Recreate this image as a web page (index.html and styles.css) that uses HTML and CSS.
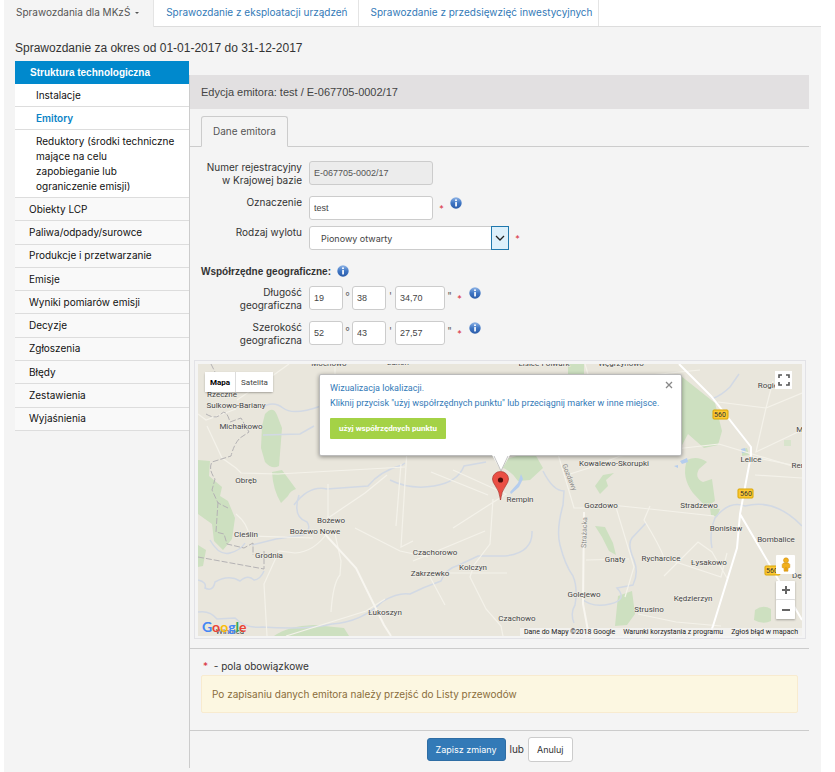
FILE: index.html
```html
<!DOCTYPE html>
<html lang="pl">
<head>
    <meta charset="UTF-8">
    <meta name="viewport" content="width=device-width, initial-scale=1.0">
    <title>Edycja emitora</title>
    <link rel="stylesheet" href="styles.css">
</head>
<body>
    <svg class="defs" width="0" height="0" aria-hidden="true">
        <defs>
            <linearGradient id="infoFill" x1="0" y1="0" x2="0" y2="1">
                <stop offset="0" stop-color="#8fb4e6"/>
                <stop offset="0.5" stop-color="#3f76c4"/>
                <stop offset="1" stop-color="#2a5ba8"/>
            </linearGradient>
            <symbol id="info" viewBox="0 0 12 12">
                <circle cx="6" cy="6" r="5.7" fill="url(#infoFill)"/>
                <circle cx="6" cy="3.3" r="1" fill="#fff"/>
                <rect x="5.2" y="5" width="1.7" height="4.4" rx="0.3" fill="#fff"/>
            </symbol>
        </defs>
    </svg>

    <div class="page">
        <nav class="top-tabs">
            <a class="active" href="#">Sprawozdania dla MKzŚ <span class="caret"></span></a>
            <a href="#">Sprawozdanie z eksploatacji urządzeń</a>
            <a href="#">Sprawozdanie z przedsięwzięć inwestycyjnych</a>
        </nav>

        <div class="body">
            <h1>Sprawozdanie za okres od 01-01-2017 do 31-12-2017</h1>

            <div class="columns">
                <aside class="sidebar">
                    <a class="side-head" href="#">Struktura technologiczna</a>
                    <ul class="submenu">
                        <li><a href="#">Instalacje</a></li>
                        <li><a class="current" href="#">Emitory</a></li>
                        <li><a href="#">Reduktory (środki techniczne mające na celu<br>zapobieganie lub ograniczenie emisji)</a></li>
                    </ul>
                    <ul class="menu">
                        <li><a href="#">Obiekty LCP</a></li>
                        <li><a href="#">Paliwa/odpady/surowce</a></li>
                        <li><a href="#">Produkcje i przetwarzanie</a></li>
                        <li><a href="#">Emisje</a></li>
                        <li><a href="#">Wyniki pomiarów emisji</a></li>
                        <li><a href="#">Decyzje</a></li>
                        <li><a href="#">Zgłoszenia</a></li>
                        <li><a href="#">Błędy</a></li>
                        <li><a href="#">Zestawienia</a></li>
                        <li><a href="#">Wyjaśnienia</a></li>
                    </ul>
                </aside>

                <main class="content">
                    <h2>Edycja emitora: test / E-067705-0002/17</h2>

                    <div class="tabs">
                        <a class="tab" href="#">Dane emitora</a>
                    </div>

                    <form>
                        <div class="fields">
                            <div class="row">
                                <label for="numer">Numer rejestracyjny<br>w Krajowej bazie</label>
                                <input class="wide" id="numer" type="text" value="E-067705-0002/17" readonly>
                            </div>
                            <div class="row tight">
                                <label for="oznaczenie">Oznaczenie</label>
                                <input class="wide" id="oznaczenie" type="text" value="test">
                                <span class="req">*</span>
                                <svg class="info"><use href="#info"/></svg>
                            </div>
                            <div class="row">
                                <label for="wylot">Rodzaj wylotu</label>
                                <div class="select">
                                    <select id="wylot">
                                        <option>Pionowy otwarty</option>
                                    </select>
                                    <span class="select-arrow">
                                        <svg width="10" height="6" viewBox="0 0 10 6"><path d="M1 1l4 4 4-4" fill="none" stroke="#222" stroke-width="1.3"/></svg>
                                    </span>
                                </div>
                                <span class="req">*</span>
                            </div>

                            <h3>Współrzędne geograficzne: <svg class="info"><use href="#info"/></svg></h3>

                            <div class="row">
                                <label for="dlugosc">Długość<br>geograficzna</label>
                                <input class="short" id="dlugosc" type="text" value="19">
                                <span class="unit">°</span>
                                <input class="short" type="text" value="38" aria-label="minuty długości">
                                <span class="unit">'</span>
                                <input class="medium" type="text" value="34,70" aria-label="sekundy długości">
                                <span class="unit">"</span>
                                <span class="req near">*</span>
                                <svg class="info"><use href="#info"/></svg>
                            </div>
                            <div class="row">
                                <label for="szerokosc">Szerokość<br>geograficzna</label>
                                <input class="short" id="szerokosc" type="text" value="52">
                                <span class="unit">°</span>
                                <input class="short" type="text" value="43" aria-label="minuty szerokości">
                                <span class="unit">'</span>
                                <input class="medium" type="text" value="27,57" aria-label="sekundy szerokości">
                                <span class="unit">"</span>
                                <span class="req near">*</span>
                                <svg class="info"><use href="#info"/></svg>
                            </div>
                        </div>

                        <div class="map-frame">
                            <div class="map">
                                <svg class="map-canvas" viewBox="0 0 604 272" preserveAspectRatio="xMidYMid slice">
                                    <rect width="604" height="272" fill="#e9e6dc"/>

                                    <!-- forests -->
                                    <g fill="#cde0c0">
                                        <path d="M67 50q8-9 12 1l5 13-3 38q-7 4-14-4l-4-14 1-22z"/>
                                        <path d="M74 108l10-2 14 19q-6 2-8 7l-7 7q-8-13-9-31z"/>
                                        <path d="M0 96l12 1-1 15 13 11-2 9 8 5 7 17-3 21-9 11-9-9-2-17-14-10z"/>
                                        <path d="M0 181l8 5-3 16-5 1z"/>
                                        <path d="M76 272q14-10 40-11l30 3 5 8z"/>
                                        <path d="M302 97l20-6 15-1 8 14-13 12-12 1q-8-12-18-14z"/>
                                        <path d="M370 0h16v12h-16z"/>
                                        <path d="M483 12l34 27 7 28-4 14-14 3-16-14-7 13z"/>
                                        <path d="M489 96q10-5 20 2l-8 7q-5 9 4 13l9-3 3 22-9 6-13-14q-12-16-6-33z"/>
                                        <path d="M397 122l8-11 11-2-8 7 2 6-8 8zM397 162l10 1 8 16 3 12-7-4-7-14z"/>
                                        <path d="M420 232l14-5 3 23-8 11-12 1z"/>
                                        <path d="M557 246q8-6 16-1v12q-8 4-17-1z"/>
                                        <path d="M512 144l10 1-3 8-6-2zM544 85l5-1 2 7-7 1z"/>
                                        <path d="M586 76h7v6h-7z" fill="#d8e4cc"/>
                                    </g>

                                    <!-- rivers -->
                                    <g fill="none" stroke="#d2d9e4" stroke-width="1.5">
                                        <path d="M63 44q12-8 22 0t38-2M65 71l37-1 14-8"/>
                                        <path d="M96 141q15-20 33-16l41-3q12-15 34-21l3-2M192 116q20 10 44 6t30-20l22-4"/>
                                        <path d="M101 131q-7 22 8 27 5 7-4 13l-27 4-24 6M0 216q9 2 7 8 8 4 10-6 14-8 25-1 8-7 14-1 6 0 10-9"/>
                                        <path d="M12 176q9 16 20 13t15-10M0 248q12-2 19 7l18-1q11 11 27 9 46 3 70-3 30-2 51-23 16-9 27-7 14-7 31-13 4-12 18-16l19-9q15 0 27 0 28-3 27-25"/>
                                        <path d="M345 107q10 20 21 20l-1 14q-7 25-3 40 5 20 13 31 5 12 2 29-5 8-1 18M384 235q10 9 28 5t7-16l16-3q6-12 1-25-7-16-2-22l14-15"/>
                                        <path d="M541 10l-9 13q-8 8-18 12M514 184q-3-15 3-30 14-18 30-12 30-8 57 20"/>
                                    </g>
                                    <path d="M312 128l8-9 3-9 2 5-4 8-8 7zM482 97l7-3 1 4-6 2zM476 102l4-1v3zM543 85l4-1 1 4-4 1z" fill="#b5cdee"/>

                                    <!-- minor roads -->
                                    <g fill="none" stroke="#f4f2ea" stroke-width="1.2">
                                        <path d="M0 50l8 6 30-11M9 62l15 32 14 10 5 5 37 1 127-7M91 0L70 15 39 36M130 120v34l37-25 22-18M38 150q12 10 13 22l64 2"/>
                                        <path d="M137 170l6 27-1 14q-7 8-9 37M157 164l45 23 28 6M130 168q-14 20-33 21l-16-2-15 33 3 52M137 0v20"/>
                                        <path d="M209 86l-6 97 12-6M203 100l-5 62M255 106l53 24-53 34M295 135l-3 45-16 21-4 12 16 32 15 17 2 10M215 197l72-30M232 213l15 28M235 209h74"/>
                                        <path d="M88 272l80-25 19-12M290 131l-57-23M360 90l16 54h12M372 110l22-7 28-11 64-8 35-4 83 25M403 142l10-1 39 4 64 7"/>
                                        <path d="M387 0l5 17 110-11M452 142l-6 14q16 26 20 38l57 19 6-24M466 212l34-34 14 10 15 26M417 140l19 63-9 30M520 38l48 6M568 44l-10 44 44-21M555 93l49 10M557 111l47 3M575 17l-7 27 36-15M388 196l43-1M440 250l38 8 45 4"/>
                                    </g>

                                    <!-- main roads -->
                                    <g fill="none" stroke="#fff" stroke-width="2">
                                        <path d="M481 0l32 32 40 51v8l-11 59 62 106M542 150l-3 34-24 78-4 10"/>
                                        <path d="M125 168l33 36 28 57 7 11" stroke="#f8f6f0"/>
                                        <path d="M386 148l-1 92 6 32" stroke="#f8f6f0"/>
                                    </g>

                                    <!-- administrative border -->
                                    <g fill="none" stroke="#b4b2b4" stroke-width="1" stroke-dasharray="6 2">
                                        <path d="M13 0l4 8M8 50q10 6 15 0t9 8l11-4 8 14-9 6q-6 6-9 18l-19 6q-4 7 3 17l-3 11 6 13 10 5M20 138l-2 30 8 2 3 10 17 4 9-5v12M0 193l66 12v-18"/>
                                    </g>

                                    <g class="street">
                                        <text x="0" y="0" transform="translate(364 101) rotate(68)">Gozdawy</text>
                                        <text x="0" y="0" transform="translate(388 184) rotate(-88)">Strażacka</text>
                                    </g>

                                    <g class="town">
                                        <text x="131" y="2">Mochowo</text>
                                        <text x="200" y="1">Łukoń</text>
                                        <text x="346" y="2">Lisice-Folwark</text>
                                        <text x="423" y="2">Węgrzynowo</text>
                                        <text x="24" y="33">Rzeczne</text>
                                        <text x="38" y="44">Sulkowo-Bariany</text>
                                        <text x="43" y="65">Michałkowo</text>
                                        <text x="48" y="119">Obręb</text>
                                        <text x="48" y="173">Cieślin</text>
                                        <text x="71" y="194">Grodnia</text>
                                        <text x="133" y="159">Bożewo</text>
                                        <text x="117" y="170">Bożewo Nowe</text>
                                        <text x="187" y="251">Łukoszyn</text>
                                        <text x="237" y="191">Czachorowo</text>
                                        <text x="232" y="212">Zakrzewko</text>
                                        <text x="275" y="206">Kolczyn</text>
                                        <text x="319" y="257">Czachowo</text>
                                        <text x="386" y="233">Golejewo</text>
                                        <text x="403" y="144">Gozdowo</text>
                                        <text x="322" y="138">Rempin</text>
                                        <text x="416" y="102">Kowalewo-Skorupki</text>
                                        <text x="553" y="98">Lelice</text>
                                        <text x="607" y="104">Rempin</text>
                                        <text x="573" y="24">Rogieni</text>
                                        <text x="608" y="68">Mlice</text>
                                        <text x="501" y="144">Stradzewo</text>
                                        <text x="528" y="167">Bonisław</text>
                                        <text x="578" y="178">Bombalice</text>
                                        <text x="417" y="198">Gnaty</text>
                                        <text x="463" y="197">Rycharcice</text>
                                        <text x="511" y="201">Łysakowo</text>
                                        <text x="495" y="237">Kędzierzyn</text>
                                        <text x="451" y="248">Strusino</text>
                                        <text x="605" y="214">Dębsk</text>
                                        <text x="32" y="270">Winnica</text>
                                    </g>

                                    <g class="route">
                                        <rect x="515" y="46" width="15" height="9" rx="1"/>
                                        <text x="522" y="53">560</text>
                                        <rect x="540" y="125" width="15" height="9" rx="1"/>
                                        <text x="548" y="132">560</text>
                                        <rect x="567" y="202" width="15" height="9" rx="1"/>
                                        <text x="574" y="209">560</text>
                                    </g>

                                    <!-- marker -->
                                    <path d="M302.500 136q-1-9-5-14-3-4-3-7a8 7.500 0 0 1 16 0q0 3-3 7-4 5-5 14z" fill="#ea4f44" stroke="#a8322b" stroke-width="0.700"/>
                                    <circle cx="302.500" cy="116" r="2.600" fill="#4d0e0b"/>
                                </svg>

                                <div class="map-type">
                                    <button type="button" class="on">Mapa</button>
                                    <button type="button">Satelita</button>
                                </div>

                                <div class="bubble">
                                    <p>Wizualizacja lokalizacji.<br>Kliknij przycisk "użyj współrzędnych punktu" lub przeciągnij marker w inne miejsce.</p>
                                    <button type="button" class="use-point">użyj współrzędnych punktu</button>
                                    <button type="button" class="close" aria-label="Zamknij">
                                        <svg width="8" height="8" viewBox="0 0 8 8"><path d="M1 1l6 6M7 1L1 7" stroke="#888" stroke-width="1.3"/></svg>
                                    </button>
                                    <svg class="bubble-tip" width="18" height="17" viewBox="0 0 18 17"><path d="M0 0l9 16 9-16z" fill="#fff"/><path d="M2 1l7 15 7-15" fill="none" stroke="#aaa" stroke-width="0.7"/></svg>
                                </div>

                                <button type="button" class="fullscreen" aria-label="Pełny ekran">
                                    <svg width="12" height="12" viewBox="0 0 12 12"><path d="M1 4V1h3M8 1h3v3M11 8v3H8M4 11H1V8" fill="none" stroke="#555" stroke-width="1.6"/></svg>
                                </button>

                                <div class="controls">
                                    <button type="button" aria-label="Street View">
                                        <svg width="10" height="15" viewBox="0 0 10 15"><path d="M2.500 6h5l1.300 1.500v3L7 11v3.200H3V11l-1.800-.5v-3z" fill="#f2b01e" stroke="#c98a10" stroke-width="0.5"/><path d="M5 10v4" stroke="#c98a10" stroke-width="0.7"/><circle cx="5" cy="3.300" r="2.500" fill="#f2b01e" stroke="#c98a10" stroke-width="0.5"/></svg>
                                    </button>
                                    <div class="zoom">
                                        <button type="button" aria-label="Powiększ">
                                            <svg width="8" height="8" viewBox="0 0 8 8"><path d="M0 4h8M4 0v8" stroke="#666" stroke-width="2"/></svg>
                                        </button>
                                        <button type="button" aria-label="Pomniejsz">
                                            <svg width="8" height="8" viewBox="0 0 8 8"><path d="M0 4h8" stroke="#666" stroke-width="2"/></svg>
                                        </button>
                                    </div>
                                </div>

                                <div class="google"><span class="b">G</span><span class="r">o</span><span class="y">o</span><span class="b">g</span><span class="g">l</span><span class="r">e</span></div>

                                <div class="legal">
                                    <span>Dane do Mapy ©2018 Google</span>
                                    <a href="#">Warunki korzystania z programu</a>
                                    <a href="#">Zgłoś błąd w mapach</a>
                                </div>
                            </div>
                        </div>

                        <div class="notes">
                            <p><span class="star">*</span> - pola obowiązkowe</p>
                            <div class="alert">Po zapisaniu danych emitora należy przejść do Listy przewodów</div>
                        </div>

                        <div class="actions">
                            <button type="submit" class="btn primary">Zapisz zmiany</button>
                            <span>lub</span>
                            <button type="button" class="btn">Anuluj</button>
                        </div>
                    </form>
                </main>
            </div>
        </div>
    </div>
</body>
</html>
```

FILE: styles.css
```css
* {
    box-sizing: border-box;
    margin: 0;
    padding: 0;
}

body {
    background: #fff;
    color: #333;
    font-family: Inter, "Liberation Sans", sans-serif;
    font-size: 10px;
    line-height: 13px;
}

a {
    color: #337ab7;
    text-decoration: none;
}

ul {
    list-style: none;
}

h1,
h2,
h3,
input,
.side-head {
    font-family: "Liberation Sans", Arial, sans-serif;
}

select,
button {
    font-family: inherit;
}

input,
select,
button {
    font-size: 9px;
    color: #444;
}

.defs {
    position: absolute;
}

.page {
    display: flex;
    flex-direction: column;
    min-height: 100vh;
    margin: 0 14px 0 4px;
}

/* top tabs */
.top-tabs {
    display: flex;
    background: #fff;
    border-bottom: 1px solid #ddd;
}

.top-tabs a {
    height: 26px;
    padding: 0 10px 0 12px;
    line-height: 24px;
    border-right: 1px solid #e4e4e4;
}

.top-tabs a:last-child {
    padding-right: 6px;
}

.top-tabs .active {
    height: 27px;
    margin-bottom: -1px;
    padding-right: 14px;
    background: #f4f4f4;
    color: #555;
}

.caret {
    display: inline-block;
    margin-left: 2px;
    vertical-align: middle;
    border: 2px solid transparent;
    border-top-color: #555;
    border-bottom: 0;
}

.body {
    flex: 1;
    padding: 13px 12px 4px 11px;
    background: #f4f4f4;
}

h1 {
    font-size: 12px;
    font-weight: normal;
    line-height: 16px;
    margin-bottom: 5px;
}

.columns {
    display: flex;
}

/* sidebar */
.sidebar {
    width: 174px;
    flex: none;
}

.sidebar a {
    color: #111;
}

.sidebar .side-head {
    display: block;
    padding-left: 15px;
    background: #0089cd;
    color: #fff;
    font-weight: bold;
    line-height: 23px;
}

.submenu li {
    padding: 0 12px 0 21px;
    background: #fff;
    border-bottom: 1px solid #ddd;
    line-height: 22px;
}

.submenu li:last-child {
    padding-top: 4px;
    padding-bottom: 3px;
    line-height: 15px;
}

.sidebar .current {
    color: #0a84c6;
    font-weight: 600;
}

.menu {
    display: flex;
    flex-direction: column;
    min-height: 233px;
}

.menu li {
    display: flex;
    flex: 1;
    align-items: center;
    padding-left: 14px;
    background: #f9f9f9;
    border-bottom: 1px solid #ddd;
}

/* content */
.content {
    flex: 1;
    min-width: 0;
    margin-top: 14px;
    border-left: 1px solid #ccc;
}

h2 {
    padding-left: 11px;
    background: #e2e0e1;
    color: #444;
    font-size: 11px;
    font-weight: normal;
    line-height: 34px;
}

.tabs {
    display: flex;
    padding: 7px 11px 0;
    border-bottom: 1px solid #ccc;
}

.tab {
    margin-bottom: -1px;
    padding: 0 11px;
    border: 1px solid #ccc;
    border-bottom-color: #f4f4f4;
    border-radius: 3px 3px 0 0;
    background: #f4f4f4;
    color: #555;
    line-height: 29px;
}

.fields {
    padding: 14px 11px 4px;
}

.row {
    display: flex;
    align-items: flex-start;
    margin-bottom: 9px;
}

.row.tight {
    margin-bottom: 6px;
}

.row label {
    width: 101px;
    margin-right: 7px;
    text-align: right;
}

.row input {
    height: 24px;
    padding: 0 4px;
    border: 1px solid #ccc;
    border-radius: 3px;
    background: #fff;
}

.row input[readonly] {
    background: #ececec;
    color: #555;
}

.row .wide {
    width: 124px;
}

.row .short {
    width: 34px;
}

.row .medium {
    width: 50px;
}

.unit {
    width: 9px;
    padding-top: 4px;
    color: #666;
    text-align: center;
}

.req {
    width: 17px;
    padding-top: 6px;
    color: #d9303a;
    font-size: 9px;
    text-align: center;
}

.req.near {
    width: 11px;
    margin-right: 4px;
}

.info {
    width: 12px;
    height: 12px;
}

.row .info {
    margin-top: 1px;
}

.select {
    position: relative;
    width: 200px;
}

.select select {
    display: block;
    appearance: none;
    width: 100%;
    height: 24px;
    padding: 0 20px 0 11px;
    border: 1px solid #ccc;
    border-radius: 3px;
    background: #fff;
}

.select-arrow {
    position: absolute;
    top: 0;
    right: 0;
    bottom: 0;
    display: flex;
    align-items: center;
    justify-content: center;
    width: 18px;
    border: 1px solid #1f78ad;
    background: #dcf0fb;
    pointer-events: none;
}

h3 {
    display: flex;
    gap: 6px;
    margin: 15px 0 8px;
    font-size: 10px;
    line-height: 13px;
}

/* map */
.map-frame {
    margin: 0 3px 9px 4px;
    padding: 3px 3px 2px;
    border: 1px solid #e2e2e6;
}

.map {
    position: relative;
    height: 272px;
    overflow: hidden;
    font-family: Roboto, sans-serif;
}

.map button {
    border: 0;
    background: #fff;
}

.map-canvas {
    display: block;
    width: 100%;
    height: 100%;
}

.town text {
    fill: #444;
    stroke: #f3f1ea;
    stroke-width: 1px;
    paint-order: stroke;
    font-size: 8px;
    text-anchor: middle;
}

.street text {
    fill: #8a8a8a;
    font-size: 7px;
}

.route rect {
    fill: #fcc934;
    stroke: #d9a400;
}

.route text {
    fill: #333;
    font-size: 7px;
    text-anchor: middle;
}

.map-type {
    position: absolute;
    top: 8px;
    left: 7px;
    display: flex;
    border-radius: 2px;
    box-shadow: 0 1px 2px rgba(0, 0, 0, 0.3);
}

.map-type button {
    height: 20px;
    padding: 0 5px;
    font-size: 8px;
    color: #444;
}

.map-type .on {
    border-right: 1px solid #ddd;
    color: #000;
    font-weight: bold;
}

.bubble {
    position: absolute;
    top: 10px;
    left: 50%;
    width: 363px;
    height: 82px;
    margin-left: -181px;
    padding: 6px 10px;
    background: #fff;
    border: 1px solid #bbb;
    border-radius: 2px;
    box-shadow: 0 1px 4px rgba(0, 0, 0, 0.4);
    color: #337ab7;
    font-size: 9px;
    line-height: 15px;
    white-space: nowrap;
}

.bubble .use-point {
    display: block;
    height: 21px;
    margin-top: 7px;
    padding: 0 9px;
    background: #a4d246;
    border-radius: 1px;
    color: #fff;
    font-size: 8px;
    font-weight: bold;
}

.bubble .close {
    position: absolute;
    top: 6px;
    right: 8px;
    display: flex;
    background: none;
}

.bubble-tip {
    position: absolute;
    top: 80px;
    left: 172px;
}

.fullscreen {
    position: absolute;
    top: 7px;
    right: 10px;
    display: flex;
    align-items: center;
    justify-content: center;
    width: 17px;
    height: 18px;
}

.controls {
    position: absolute;
    right: 7px;
    bottom: 17px;
    display: flex;
    flex-direction: column;
    gap: 7px;
}

.controls button {
    display: flex;
    align-items: center;
    justify-content: center;
    width: 19px;
    height: 19px;
    border-radius: 1px;
}

.zoom {
    box-shadow: 0 1px 2px rgba(0, 0, 0, 0.3);
}

.zoom button:first-child {
    border-bottom: 1px solid #ddd;
}

.google {
    position: absolute;
    left: 4px;
    bottom: 1px;
    font-family: Lato, sans-serif;
    font-size: 14px;
    font-weight: bold;
    line-height: 16px;
}

.google .b { color: #4285f4; }
.google .r { color: #ea4335; }
.google .y { color: #fbbc05; }
.google .g { color: #34a853; }

.legal {
    position: absolute;
    right: 0;
    bottom: 0;
    display: flex;
    gap: 8px;
    padding: 0 4px;
    background: rgba(245, 245, 245, 0.7);
    font-size: 7px;
    line-height: 8px;
}

.legal,
.legal a {
    color: #222;
}

/* footer of the form */
.notes {
    padding: 11px 11px 17px;
    border-top: 1px solid #ccc;
}

.notes p {
    padding-left: 2px;
}

.star {
    margin-right: 3px;
    color: #d9303a;
}

.alert {
    margin-top: 2px;
    padding: 0 10px;
    border: 1px solid #f8ebcf;
    border-radius: 2px;
    background: #fcf7e1;
    color: #8a6d3b;
    line-height: 36px;
}

.actions {
    display: flex;
    align-items: center;
    justify-content: center;
    gap: 4px;
    padding: 6px 0;
    border-top: 1px solid #ccc;
}

.btn {
    height: 25px;
    padding: 0 8px;
    border: 1px solid #ccc;
    border-radius: 3px;
    background: #fff;
    color: #333;
}

.btn.primary {
    height: 23px;
    border-color: #2e6da4;
    background: #337ab7;
    color: #fff;
}
```
